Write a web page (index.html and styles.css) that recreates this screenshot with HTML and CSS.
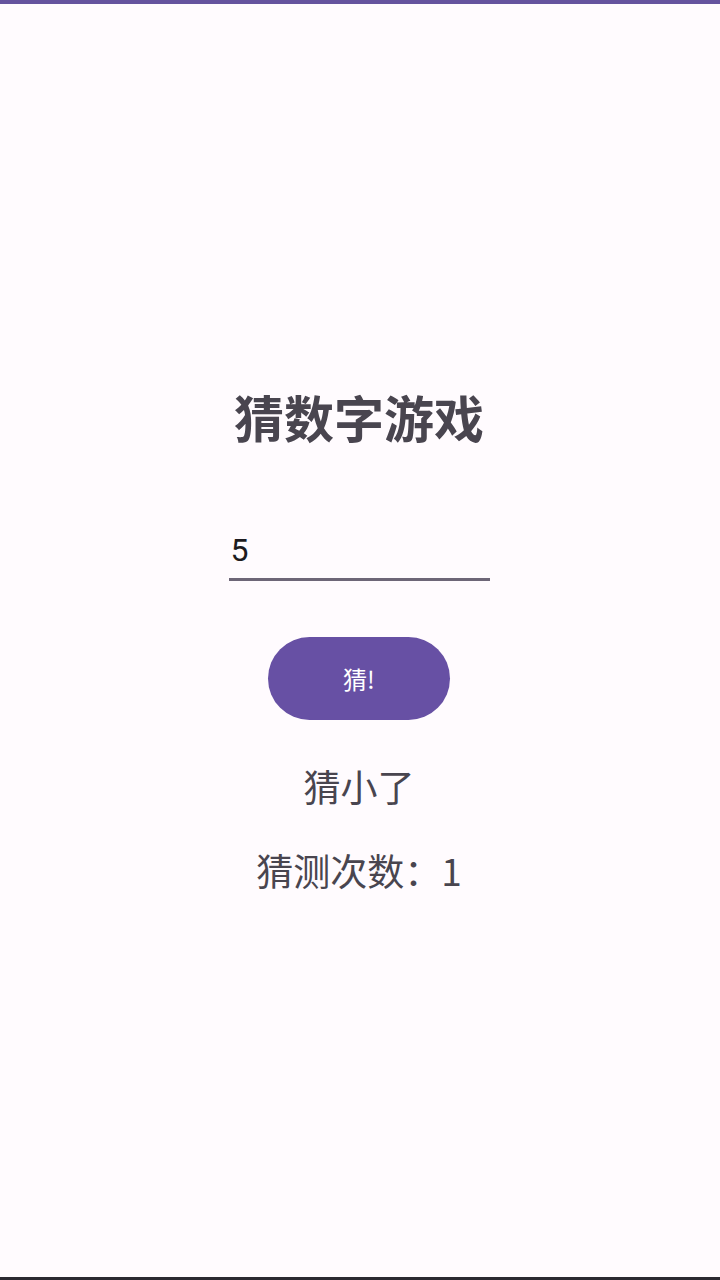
FILE: index.html
```html
<!DOCTYPE html>
<html lang="zh">
<head>
<meta charset="utf-8">
<link rel="stylesheet" href="styles.css">
</head>
<body>
<div class="screen">
  <div class="status-bar"></div>
  <main class="content">
    <h1 class="title">猜数字游戏</h1>
    <div class="field"><span class="field-value">5</span></div>
    <button class="guess-btn">猜!</button>
    <p class="result">猜小了</p>
    <p class="count">猜测次数：1</p>
  </main>
  <div class="nav-edge"></div>
</div>
</body>
</html>
```
FILE: styles.css
```css
html, body {
  margin: 0;
  padding: 0;
}
body {
  background: #fffbfe;
  font-family: Roboto, "Noto Sans CJK SC", sans-serif;
}
.screen {
  width: 720px;
  height: 1280px;
  display: flex;
  flex-direction: column;
  background: #fffbfe;
}
.status-bar {
  height: 4px;
  background: #65539e;
  flex: none;
}
.content {
  flex: 1;
  display: flex;
  flex-direction: column;
  align-items: center;
  padding-top: 382px;
  padding-right: 2px;
}
.title {
  margin: 0;
  font-size: 50px;
  line-height: 60px;
  font-weight: 700;
  color: #49454f;
  font-family: "Noto Sans CJK SC", sans-serif;
}
.field {
  margin-top: 80px;
  width: 261px;
  height: 52px;
  border-bottom: 3px solid #6d6677;
  box-sizing: content-box;
  display: flex;
  align-items: flex-start;
}
.field-value {
  font-size: 32px;
  line-height: 48px;
  color: #1d1b20;
  padding-left: 2px;
}
.guess-btn {
  margin-top: 56px;
  width: 182px;
  height: 83px;
  border: none;
  border-radius: 42px;
  background: #6750a4;
  color: #ffffff;
  font-size: 24px;
  font-family: "Noto Sans CJK SC", sans-serif;
  padding: 0;
}
.result {
  margin: 42px 0 0;
  font-size: 37px;
  line-height: 48px;
  color: #49454f;
  font-family: "Noto Sans CJK SC", sans-serif;
}
.count {
  margin: 36px 0 0;
  font-size: 37px;
  line-height: 48px;
  color: #49454f;
  font-family: "Noto Sans CJK SC", Roboto, sans-serif;
}
.nav-edge {
  height: 3px;
  background: #2b2930;
  flex: none;
}
```
